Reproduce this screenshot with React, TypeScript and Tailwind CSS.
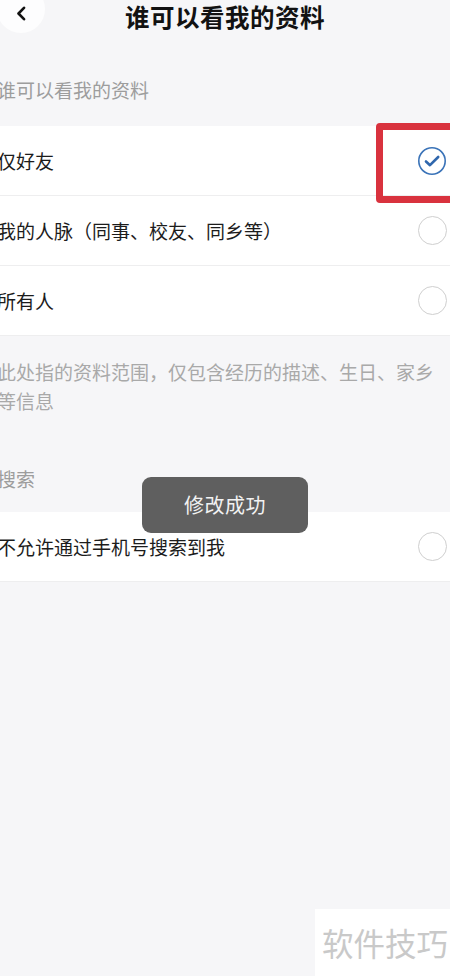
const font = { fontFamily: '"Noto Sans CJK SC", "Noto Sans", sans-serif' };

function Radio({ checked }: { checked?: boolean }) {
  if (checked) {
    return (
      <svg width="30" height="30" viewBox="0 0 30 30" className="shrink-0">
        <circle cx="15" cy="15" r="13.2" fill="none" stroke="#3a73b8" strokeWidth="1.6" />
        <path d="M9 15.5 L13 19.2 L21.2 11" fill="none" stroke="#2f67ad" strokeWidth="2.6" strokeLinecap="round" strokeLinejoin="round" />
      </svg>
    );
  }
  return <span className="w-[29px] h-[29px] rounded-full border-[1.5px] border-[#cfcfcf] shrink-0" />;
}

function Row({ label, checked }: { label: string; checked?: boolean }) {
  return (
    <div className="h-[70px] bg-white border-b border-[#eeeeef] flex items-center justify-between pl-0 pr-[3px]">
      <span className="ml-[-3px] text-[19px] text-[#1c1c1c] leading-none">{label}</span>
      <Radio checked={checked} />
    </div>
  );
}

export default function App() {
  return (
    <div className="relative w-[450px] min-h-[976px] bg-[#f6f6f8] overflow-hidden" style={font}>
      {/* header */}
      <header className="grid grid-cols-[1fr_auto_1fr] items-center h-[30px] pt-[1px]">
        <div className="w-[48px] h-[48px] -mt-[16px] -ml-[3px] rounded-full bg-white/80 flex items-end justify-center pb-[12px]">
          <svg width="10" height="15" viewBox="0 0 10 15">
            <path d="M8 1.8 L2.5 7.5 L8 13.2" fill="none" stroke="#111" strokeWidth="2.6" strokeLinecap="round" strokeLinejoin="round" />
          </svg>
        </div>
        <h1 className="text-[24.5px] font-bold text-[#121212] leading-[30px] tracking-[0.5px]">谁可以看我的资料</h1>
        <div />
      </header>

      <div className="pt-[46px] pb-[22px] leading-[28px] text-[19px] text-[#9d9d9d]">
        <span className="ml-[-3px]">谁可以看我的资料</span>
      </div>

      <Row label="仅好友" checked />
      <Row label="我的人脉（同事、校友、同乡等）" />
      <Row label="所有人" />

      <p className="pt-[21px] pr-[6px] ml-[-3px] text-[19px] leading-[29px] text-[#a9a9a9]">
        此处指的资料范围，仅包含经历的描述、生日、家乡等信息
      </p>

      <div className="pt-[49px] pb-[19px] leading-[29px] text-[19px] text-[#9d9d9d]">
        <span className="ml-[-3px]">搜索</span>
      </div>

      <Row label="不允许通过手机号搜索到我" />

      {/* red highlight */}
      <div className="absolute left-[376px] top-[123px] w-[84px] h-[80px] border-[7px] border-[#d9323e] rounded-[4px]" />

      {/* toast */}
      <div className="absolute left-[142px] top-[477px] w-[166px] h-[56px] rounded-[9px] bg-[#5f5f5f] flex items-center justify-center">
        <span className="text-[20px] text-[#f2f2f2] tracking-[0.5px]">修改成功</span>
      </div>

      {/* watermark */}
      <div className="absolute right-0 bottom-0 w-[135px] h-[67px] bg-white flex items-center justify-end pr-[2px]">
        <span className="text-[31.5px] text-[#c9c9c9] leading-none">软件技巧</span>
      </div>
    </div>
  );
}
